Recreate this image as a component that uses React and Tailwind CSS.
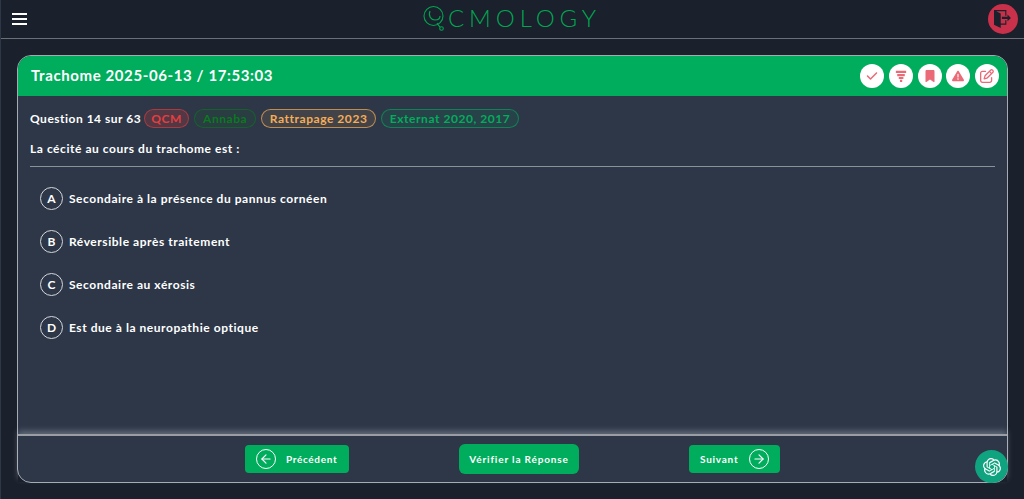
import React from 'react';
import { FaCheck, FaBookmark, FaTriangleExclamation, FaRegPenToSquare } from 'react-icons/fa6';
import { ImExit } from 'react-icons/im';
import { SiOpenai } from 'react-icons/si';
import { FiArrowLeft, FiArrowRight } from 'react-icons/fi';

const tags = [
  { label: 'QCM', cls: 'text-[#e53e3e] border-[#e53e3e]/60 bg-[#e53e3e]/20 w-[45px]' },
  { label: 'Annaba', cls: 'text-[#0b7a1e] border-[#0b7a1e]/60 bg-[#0b7a1e]/10 w-[62px]' },
  { label: 'Rattrapage 2023', cls: 'text-[#f6ad55] border-[#f6ad55]/70 bg-[#f6ad55]/10 w-[115px]' },
  { label: 'Externat 2020, 2017', cls: 'text-[#00ad5c] border-[#00ad5c]/60 bg-[#00ad5c]/10 w-[138px]' },
];

const answers = [
  ['A', 'Secondaire à la présence du pannus cornéen'],
  ['B', 'Réversible après traitement'],
  ['C', 'Secondaire au xérosis'],
  ['D', 'Est due à la neuropathie optique'],
];

const TornadoIcon = ({ size }) => (
  <svg width={size} height={size} viewBox="0 0 14 14" fill="currentColor">
    <path d="M1 1h12v2.6H1zM2.6 4.6h8.8v2.6H2.6zM4.4 8.2h5.4v2.4H4.4zM5.8 11.4h2.6V14H5.8z" />
  </svg>
);

const tools = [FaCheck, TornadoIcon, FaBookmark, FaTriangleExclamation, FaRegPenToSquare];

const App = () => {
  return (
    <div className="h-[499px] w-[1024px] overflow-hidden border-l border-[#2d3748] bg-[#1a202c] font-['Lato',sans-serif] text-white">
      {/* barre du haut */}
      <header className="flex h-[39px] items-center justify-between border-b border-[#6b6f76] pl-[11px] pr-[6px]">
        <div className="flex w-[15px] flex-col gap-[3px]">
          <span className="h-[2px] bg-white" />
          <span className="h-[2px] bg-white" />
          <span className="h-[2px] bg-white" />
        </div>
        <div className="flex items-center gap-[2px] pl-[8px] pb-[2px] text-[#00a651]">
          <svg width="24" height="32" viewBox="0 0 24 32" fill="none" stroke="currentColor" strokeWidth="1.1">
            <circle cx="11.5" cy="14" r="9.5" />
            <path d="M8 9c-2 5 1 9 5 9s5-2 5-4" />
            <path d="M15 21c1 2 2 3 3 4" />
            <circle cx="19.5" cy="26.5" r="1.8" />
          </svg>
          <span className="text-[24px] font-light leading-none tracking-[4.9px]">CMOLOGY</span>
        </div>
        <div className="flex h-[30px] w-[30px] items-center justify-center rounded-full bg-[#c9304a] text-[#1a202c]">
          <ImExit size={18} />
        </div>
      </header>

      {/* carte question */}
      <main className="pl-[16px] pt-[16px]">
        <section className="relative flex h-[428px] w-[991px] flex-col rounded-[14px] border border-[#a6abb3] bg-[#2d3748]">
          <div className="flex h-[40px] items-center justify-between rounded-t-[13px] bg-[#00ad5c] pl-[13px] pr-[8px]">
            <h1 className="pb-[2px] text-[15px] font-bold tracking-[0.6px]">Trachome 2025-06-13 / 17:53:03</h1>
            <div className="flex gap-[4.75px]">
              {tools.map((Icon, i) => (
                <div key={i} className="flex h-[24px] w-[24px] items-center justify-center rounded-full bg-white text-[#ea6a78]">
                  <Icon size={i === 4 ? 14 : 12} />
                </div>
              ))}
            </div>
          </div>

          <div className="flex-1 px-[12px] pt-[13px]">
            <div className="flex items-center gap-[5px] pb-[12px]">
              <span className="mr-[-2px] text-[12px] font-bold tracking-[0.5px]">Question 14 sur 63</span>
              {tags.map((t) => (
                <span key={t.label} className={`flex h-[19px] items-center justify-center rounded-full border text-[12px] font-bold tracking-[0.55px] ${t.cls}`}>
                  {t.label}
                </span>
              ))}
            </div>
            <p className="border-b border-[#8b9099] pb-[9px] text-[12px] font-bold leading-[17px] tracking-[0.55px]">La cécité au cours du trachome est :</p>
            <ul className="flex flex-col gap-[20px] pl-[10px] pt-[20px]">
              {answers.map(([letter, text]) => (
                <li key={letter} className="flex items-center gap-[6px]">
                  <span className="flex h-[23px] w-[23px] items-center justify-center rounded-full border border-[#d5d7db] text-[12px] font-bold">{letter}</span>
                  <span className="text-[12px] font-bold tracking-[0.55px]">{text}</span>
                </li>
              ))}
            </ul>
          </div>

          <footer className="flex h-[48px] items-center border-t-2 border-[#9a9da3] shadow-[0_-3px_6px_rgba(200,205,215,0.35)]">
            <button className="ml-[227px] flex h-[28px] w-[104px] items-center gap-[10px] rounded-[4px] bg-[#00ad5c] pl-[11px] text-[10px] font-bold tracking-[0.65px]">
              <span className="flex h-[20px] w-[20px] items-center justify-center rounded-full border border-white"><FiArrowLeft size={14} /></span>
              Précédent
            </button>
            <button className="ml-[110px] flex h-[30px] w-[120px] items-center justify-center rounded-[6px] bg-[#00ad5c] text-[10px] font-bold tracking-[0.85px]">
              Vérifier la Réponse
            </button>
            <button className="ml-[110px] flex h-[28px] w-[91px] items-center gap-[11px] rounded-[4px] bg-[#00ad5c] pl-[11px] text-[10px] font-bold tracking-[0.75px]">
              Suivant
              <span className="flex h-[20px] w-[20px] items-center justify-center rounded-full border border-white"><FiArrowRight size={14} /></span>
            </button>
          </footer>

          <div className="absolute bottom-[-1px] right-[-1px] flex h-[33px] w-[33px] items-center justify-center rounded-full bg-[#10a37f] text-white">
            <SiOpenai size={18} />
          </div>
        </section>
      </main>
    </div>
  );
};

export default App;
